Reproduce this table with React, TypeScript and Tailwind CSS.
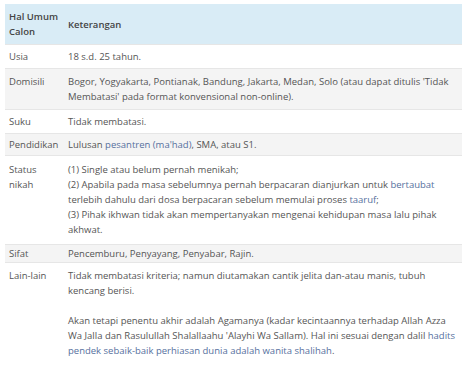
function A({ children }: { children: React.ReactNode }) {
  return <a className="text-[#56709e]">{children}</a>;
}

export default function App() {
  return (
    <div className="w-[474px] h-[375px] bg-white pt-[4px] pl-[5px] font-['Open_Sans',sans-serif] text-[9.5px] leading-[15px] text-[#555]">
      <table className="w-[457px] border-collapse table-fixed">
        <colgroup>
          <col className="w-[61px]" />
          <col />
        </colgroup>
        <thead>
          <tr className="bg-[#d9ecf6] text-[#444] font-semibold">
            <td className="pl-[4px] py-[5px] h-[39px] align-middle">
              Hal Umum
              <br />
              Calon
            </td>
            <td className="px-[2px] py-[5px] align-middle">Keterangan</td>
          </tr>
        </thead>
        <tbody>
          <tr className="border-t border-[#e6e6e6]">
            <td className="pl-[4px] py-[4px] h-[24px] align-top">Usia</td>
            <td className="px-[2px] py-[4px] align-top">18 s.d. 25 tahun.</td>
          </tr>
          <tr className="border-t border-[#e6e6e6] bg-[#f4f4f4]">
            <td className="pl-[4px] py-[5px] align-top">Domisili</td>
            <td className="px-[2px] py-[5px] align-top">
              Bogor, Yogyakarta, Pontianak, Bandung, Jakarta, Medan, Solo (atau dapat ditulis 'Tidak Membatasi' pada format konvensional non-online).
            </td>
          </tr>
          <tr className="border-t border-[#e6e6e6]">
            <td className="pl-[4px] py-[4px] h-[24px] align-top">Suku</td>
            <td className="px-[2px] py-[4px] align-top">Tidak membatasi.</td>
          </tr>
          <tr className="border-t border-[#e6e6e6] bg-[#f4f4f4]">
            <td className="pl-[4px] py-[3px] h-[22px] align-top">Pendidikan</td>
            <td className="px-[2px] py-[3px] align-top">
              Lulusan <A>pesantren (ma'had)</A>, SMA, atau S1.
            </td>
          </tr>
          <tr className="border-t border-[#e6e6e6]">
            <td className="pl-[4px] pt-[6px] pb-[7px] align-top">
              Status
              <br />
              nikah
            </td>
            <td className="px-[2px] pt-[6px] pb-[7px] align-top">
              (1) Single atau belum pernah menikah;
              <br />
              (2) Apabila pada masa sebelumnya pernah berpacaran dianjurkan untuk <A>bertaubat</A> terlebih dahulu dari dosa berpacaran sebelum memulai proses <A>taaruf</A>;
              <br />
              (3) Pihak ikhwan tidak akan mempertanyakan mengenai kehidupan masa lalu pihak akhwat.
            </td>
          </tr>
          <tr className="border-t border-[#e6e6e6] bg-[#f4f4f4]">
            <td className="pl-[4px] py-[1px] h-[18px] align-top">Sifat</td>
            <td className="px-[2px] py-[1px] align-top">Pencemburu, Penyayang, Penyabar, Rajin.</td>
          </tr>
          <tr className="border-t border-[#e6e6e6]">
            <td className="pl-[4px] pt-[5px] pb-[10px] align-top">Lain-lain</td>
            <td className="px-[2px] pt-[5px] pb-[10px] align-top">
              <p>Tidak membatasi kriteria; namun diutamakan cantik jelita dan-atau manis, tubuh kencang berisi.</p>
              <p className="mt-[15px]">
                Akan tetapi penentu akhir adalah Agamanya (kadar kecintaannya terhadap Allah Azza Wa Jalla dan Rasulullah Shalallaahu 'Alayhi Wa Sallam). Hal ini sesuai dengan dalil <A>hadits pendek sebaik-baik perhiasan dunia adalah wanita shalihah</A>.
              </p>
            </td>
          </tr>
        </tbody>
      </table>
    </div>
  );
}
